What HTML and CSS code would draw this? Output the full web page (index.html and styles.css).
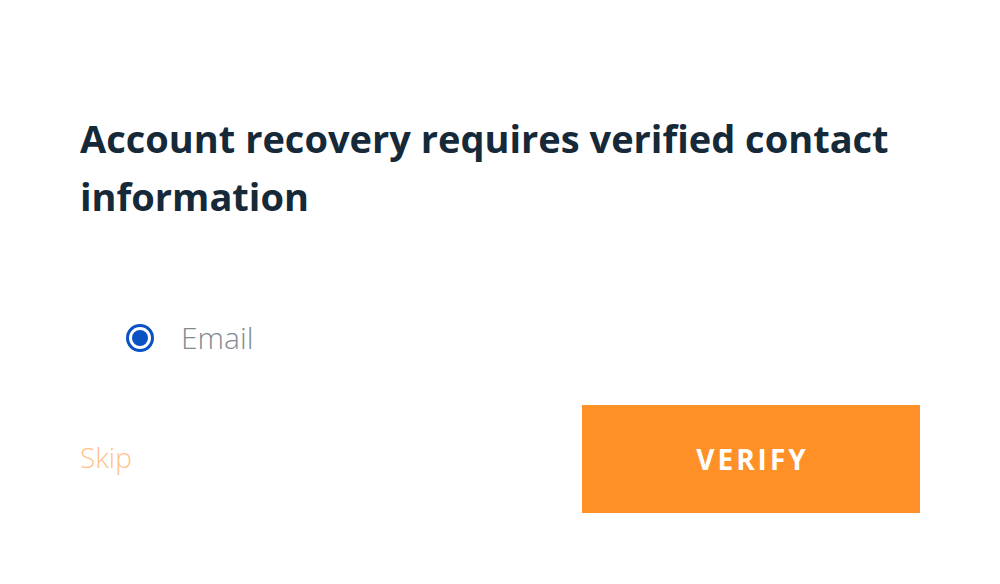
FILE: index.html
```html
<!DOCTYPE html>
<html>
<head>
<meta charset="utf-8">
<link rel="stylesheet" href="styles.css">
</head>
<body>
<div class="page">
  <h1 class="title">Account recovery requires verified contact information</h1>
  <div class="options">
    <label class="option">
      <span class="radio"><span class="dot"></span></span>
      <span class="option-label">Email</span>
    </label>
  </div>
  <div class="actions">
    <a class="skip">Skip</a>
    <button class="verify">VERIFY</button>
  </div>
</div>
</body>
</html>
```
FILE: styles.css
```css
html, body {
  margin: 0;
  padding: 0;
  background: #ffffff;
}
.page {
  width: 1000px;
  height: 584px;
  box-sizing: border-box;
  padding: 109px 80px 0 80px;
  font-family: "Open Sans", "Liberation Sans", sans-serif;
}
.title {
  margin: 0;
  font-size: 38px;
  line-height: 58px;
  font-weight: 700;
  color: #152939;
  width: 840px;
}
.options {
  margin-top: 92px;
  padding-left: 46px;
}
.option {
  display: flex;
  align-items: center;
  gap: 27px;
  height: 41px;
}
.radio {
  width: 28px;
  height: 28px;
  box-sizing: border-box;
  border: 3px solid #0a52c4;
  border-radius: 50%;
  display: flex;
  align-items: center;
  justify-content: center;
}
.dot {
  width: 16px;
  height: 16px;
  border-radius: 50%;
  background: #0a52c4;
}
.option-label {
  font-size: 30px;
  line-height: 41px;
  font-weight: 300;
  color: #828a94;
}
.actions {
  margin-top: 47px;
  display: flex;
  justify-content: space-between;
  align-items: center;
}
.skip {
  font-size: 28px;
  font-weight: 300;
  color: #ffc38a;
  margin-bottom: 4px;
}
.verify {
  width: 338px;
  height: 108px;
  border: none;
  background: #ff9027;
  color: #ffffff;
  font-family: "Open Sans", "Liberation Sans", sans-serif;
  font-size: 28px;
  font-weight: 700;
  letter-spacing: 3px;
  padding: 0 0 0 3px;
}
```
